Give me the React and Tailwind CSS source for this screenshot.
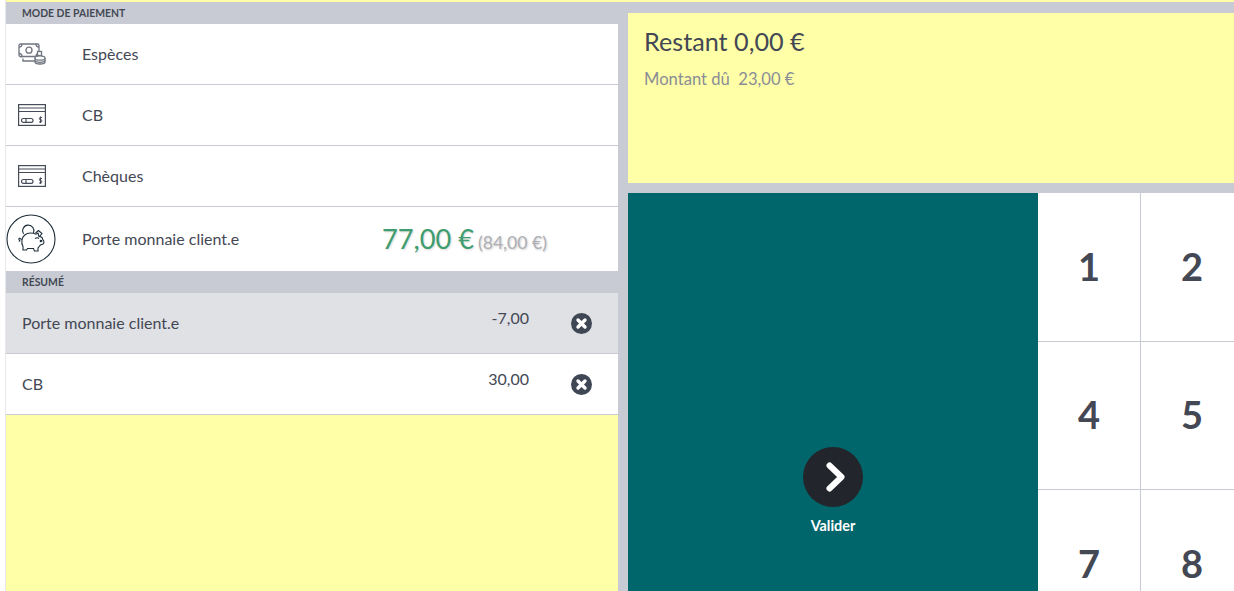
import React from 'react';

const font = { fontFamily: 'Lato, sans-serif' };

function CashIcon() {
  return (
    <svg width="28" height="22" viewBox="0 0 28 22" fill="none" stroke="#70757f" strokeWidth="1.300">
      <path d="M3 5.500v9M5 15.500v2.500h12" />
      <rect x="1" y="1" width="20" height="12.500" rx="1.500" fill="#fff" />
      <path d="M1 4c2 0 3-1 3-3M21 4c-2 0-3-1-3-3M1 10.500c2 0 3 1 3 3M21 10.500c-2 0-3 1-3 3" />
      <circle cx="11" cy="7.200" r="3" />
      <rect x="19.500" y="8.500" width="4" height="4" fill="#fff" />
      <path d="M17 15v4c0 1.200 2.200 2 5 2s5-.8 5-2v-4" fill="#fff" />
      <ellipse cx="22" cy="15" rx="5" ry="2.200" fill="#fff" />
      <path d="M17 17.500c0 1 2.200 1.800 5 1.800s5-.8 5-1.800" />
    </svg>
  );
}

function CardIcon() {
  return (
    <svg width="28" height="22" viewBox="0 0 28 22" fill="none" stroke="#454b57" strokeWidth="1.200">
      <rect x="0.600" y="0.600" width="26.800" height="20.800" />
      <path d="M0.600 4h26.800M0.600 7.500h26.800" />
      <rect x="3.500" y="14.500" width="11.500" height="3.800" rx="1.900" />
      <path d="M8 14.500v3.800" />
      <path d="M24 13.500h-2c-.9 0-.9 2.200 0 2.200h1.200c.9 0 .9 2.300 0 2.300H21M22.500 12.500v6.500" strokeWidth="1" />
    </svg>
  );
}

function PiggyIcon() {
  return (
    <svg width="50" height="50" viewBox="0 0 50 50" fill="none" stroke="#1f2f3a" strokeWidth="1.100">
      <circle cx="25" cy="25" r="24" />
      <path d="M17.500 20a5.700 5.700 0 1 1 10-1" />
      <path d="M16 26c.5-4 4-7 8.500-7 2.500 0 4 .4 5.500 1.200l2-1.200.8 3 3.200 1.500 1 2.500c1.200.8 1.200 3.200 0 4l-2.500 1-2.500 3v3h-3.500l-1-2.500h-6L20.500 36H17v-3.500c-1-1.500-1.500-4-1-6.500z" />
      <path d="M16 25.500l-3-1.500M13 27.500l2-3M12.500 24.500l1.500 3" />
      <path d="M29.500 19l3-2.500 3.500 3-3 3.500" />
      <path d="M29 24.500c1.500-1 3-1 4 0" />
      <circle cx="35" cy="27" r="0.800" fill="#1f2f3a" />
    </svg>
  );
}

function RemoveIcon() {
  return (
    <svg width="21" height="21" viewBox="0 0 21 21">
      <circle cx="10.500" cy="10.500" r="10.500" fill="#3f4654" />
      <path d="M7 7l7 7M14 7l-7 7" stroke="#fff" strokeWidth="3.400" strokeLinecap="round" />
    </svg>
  );
}

function SectionTitle({ children }) {
  return (
    <div className="h-[22px] bg-[#c8cbd3] pl-[16px] text-[10.400px] leading-[22px] font-bold text-[#434854]">
      {children}
    </div>
  );
}

function PayRow({ icon, label }) {
  return (
    <div className="flex h-[61px] items-center border-b border-[#c8cbd3] bg-white text-[16px] text-[#434854]">
      <div className="flex w-[76px] justify-center pr-[25px]">{icon}</div>
      <span>{label}</span>
    </div>
  );
}

function SummaryRow({ label, amount, active }) {
  return (
    <div className={`flex h-[61px] items-center border-b border-[#c8cbd3] pl-[16px] text-[16px] text-[#434854] ${active ? 'bg-[#e0e1e5]' : 'bg-white'}`}>
      <span className="flex-1">{label}</span>
      <span className="mb-[10px] w-[60px] text-right">{amount}</span>
      <span className="mr-[26px] ml-[42px]"><RemoveIcon /></span>
    </div>
  );
}

function Key({ n, right, last }) {
  return (
    <div className={`flex items-center justify-center bg-white pb-[2px] text-[38px] leading-none font-bold text-[#434854] ${last ? 'h-[148.500px]' : 'h-[148.500px] border-b border-[#c8cbd3]'} ${right ? 'w-[102px] shrink-0' : 'w-[103px] shrink-0 border-r border-[#c8cbd3]'}`}>
      {n}
    </div>
  );
}

export default function App() {
  return (
    <div style={font} className="flex h-[591px] w-[1234px] flex-col overflow-hidden bg-white">
      <div className="flex h-full pl-[5px]">
        <div className="flex h-full w-full flex-col border-l border-[#e8e8ea] bg-[#c8cbd3]">
          <div className="h-[2px] shrink-0 bg-[#ffffa8]" />
          <div className="flex min-h-0 flex-1 gap-[10px]">
            {/* left column */}
            <div className="flex w-[612px] shrink-0 flex-col">
              <SectionTitle>MODE DE PAIEMENT</SectionTitle>
              <PayRow icon={<CashIcon />} label="Espèces" />
              <PayRow icon={<CardIcon />} label="CB" />
              <PayRow icon={<CardIcon />} label="Chèques" />
              <div className="flex h-[64px] items-center bg-white text-[16px] text-[#434854]">
                <div className="w-[76px]"><PiggyIcon /></div>
                <span className="w-[300px]">Porte monnaie client.e</span>
                <span className="text-[27.200px] leading-none text-[#3f9d6f] [text-shadow:1px_1px_2px_rgba(0,0,0,0.15)]">77,00 €</span>
                <span className="mt-[7px] ml-[4px] text-[17.600px] leading-none text-[#aeb0b5] [text-shadow:1px_1px_2px_rgba(0,0,0,0.2)]">(84,00 €)</span>
              </div>
              <SectionTitle>RÉSUMÉ</SectionTitle>
              <SummaryRow label="Porte monnaie client.e" amount="-7,00" active />
              <SummaryRow label="CB" amount="30,00" />
              <div className="flex-1 bg-[#ffffa8]" />
            </div>
            {/* right column */}
            <div className="flex min-w-0 flex-1 flex-col gap-[10px] pt-[11px]">
              <div className="h-[170px] shrink-0 bg-[#ffffa8] px-[16px] pt-[13px]">
                <div className="text-[25.200px] leading-[30px] text-[#434854]">Restant 0,00 €</div>
                <div className="mt-[11px] text-[16.600px] leading-[24px] text-[#8a8d96]">Montant dû&nbsp; 23,00 €</div>
              </div>
              <div className="flex min-h-0 flex-1">
                <div className="flex w-[410px] shrink-0 flex-col items-center bg-[#00666b] pt-[254px]">
                  <div className="flex h-[60px] w-[60px] items-center justify-center rounded-full bg-[#22262c] pl-[5px]">
                    <svg width="20" height="30" viewBox="0 0 20 30" fill="none" stroke="#fff" strokeWidth="6" strokeLinecap="round" strokeLinejoin="round">
                      <path d="M3.500 3.500L15.500 15L3.500 26.500" />
                    </svg>
                  </div>
                  <span className="mt-[8px] text-[14.400px] font-bold text-white">Valider</span>
                </div>
                <div className="flex min-w-0 flex-1 flex-col overflow-hidden">
                  <div className="flex shrink-0"><Key n="1" /><Key n="2" right /></div>
                  <div className="flex shrink-0"><Key n="4" /><Key n="5" right /></div>
                  <div className="flex shrink-0"><Key n="7" last /><Key n="8" right last /></div>
                </div>
              </div>
            </div>
          </div>
        </div>
      </div>
    </div>
  );
}
